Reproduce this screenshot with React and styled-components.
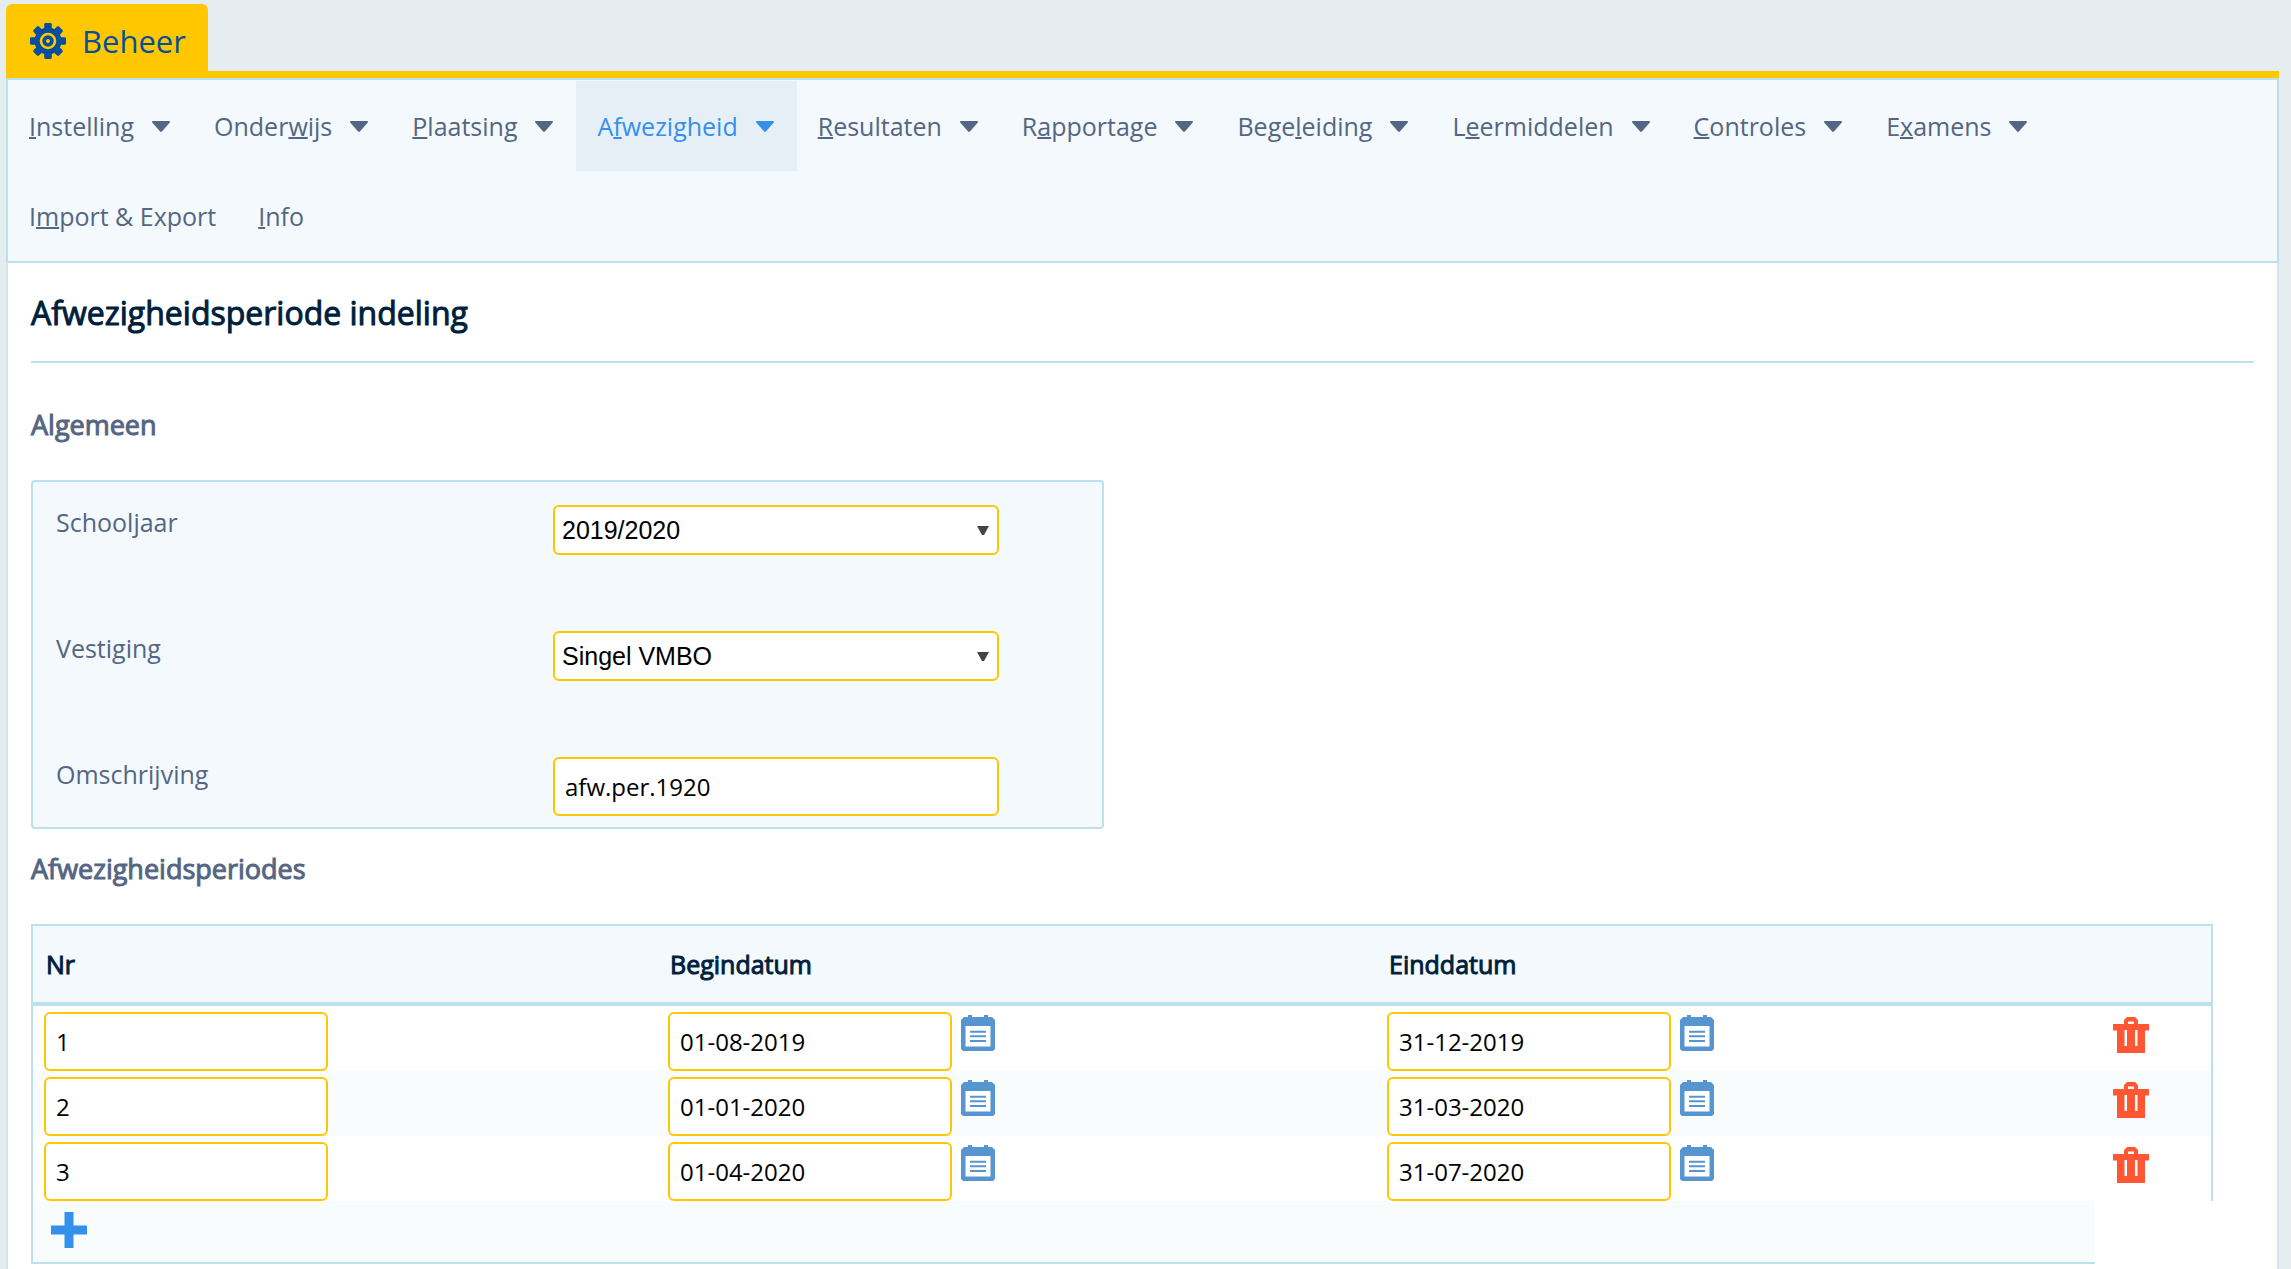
import React from "react";
import styled, { createGlobalStyle } from "styled-components";

const colors = {
  backdrop: "#e5edf0",
  pageEdge: "#d6e5ea",
  line: "#bbe1ef",
  panel: "#f3f9fd",
  active: "#e6eff5",
  stripe: "#f8fcfd",
  yellow: "#ffc700",
  brand: "#054f9e",
  text: "#546683",
  heading: "#001f3d",
  link: "#3391ec",
  calendar: "#5695d0",
  danger: "#ff5733",
};

const GlobalStyle = createGlobalStyle`
  *, *::before, *::after { box-sizing: border-box; }
  body {
    margin: 0;
    background: ${colors.backdrop};
    color: ${colors.text};
    font: 25px/34px "Open Sans", sans-serif;
  }
`;

const Shell = styled.div`
  display: flex;
  flex-direction: column;
  min-height: 100vh;
  padding: 4px 12px 0 6px;
`;

const TabBar = styled.header`
  display: flex;
  border-bottom: 7px solid ${colors.yellow};
`;

const Tab = styled.a`
  display: flex;
  align-items: center;
  gap: 16px;
  height: 67px;
  padding: 7px 22px 0 24px;
  border-radius: 6px 6px 0 0;
  background: ${colors.yellow};
  color: ${colors.brand};
  font-size: 31px;
  text-decoration: none;
`;

const Nav = styled.nav`
  display: flex;
  flex-wrap: wrap;
  padding: 1px 21px 0 0;
  border: 2px solid ${colors.line};
  background: ${colors.panel};
`;

const NavItem = styled.button`
  display: flex;
  align-items: center;
  gap: 18px;
  height: 90px;
  padding: 0 23px 0 21px;
  border: 0;
  background: ${(p) => (p.$active ? colors.active : "transparent")};
  color: ${(p) => (p.$active ? colors.link : colors.text)};
  font: inherit;
  cursor: pointer;
`;

const NavLink = styled.a`
  display: flex;
  align-items: center;
  height: 90px;
  padding: 0 21px;
  color: ${colors.text};
  text-decoration: none;
`;

const Key = styled.span`
  text-decoration: underline;
  text-decoration-thickness: 2px;
  text-decoration-skip-ink: none;
`;

const Page = styled.main`
  flex: 1;
  padding: 26px 23px 0;
  border: solid ${colors.pageEdge};
  border-width: 0 2px;
  background: #fff;
`;

const Title = styled.h1`
  margin: 0 0 42px;
  padding-bottom: 24px;
  border-bottom: 2px solid ${colors.line};
  color: ${colors.heading};
  font-size: 32px;
  font-weight: 400;
  line-height: 48px;
  -webkit-text-stroke: 1px currentColor;
`;

const SectionTitle = styled.h2`
  margin: 0 0 35px;
  font-size: 27px;
  font-weight: 400;
  line-height: 40px;
  -webkit-text-stroke: 1px currentColor;
`;

const Panel = styled.div`
  display: flex;
  flex-direction: column;
  width: calc(50% - 39px);
  margin-bottom: 20px;
  padding: 23px 23px 11px;
  border: 2px solid ${colors.line};
  border-radius: 4px;
  background: ${colors.panel};
`;

const Field = styled.div`
  display: grid;
  grid-template-columns: 497px minmax(0, 446px);
  align-items: start;
  min-height: 126px;

  &:last-child {
    min-height: 0;
  }
`;

const SelectBox = styled.div`
  position: relative;
  display: flex;

  svg {
    position: absolute;
    top: 21px;
    right: 10px;
    pointer-events: none;
  }
`;

const Select = styled.select`
  appearance: none;
  width: 100%;
  height: 50px;
  padding: 0 30px 0 7px;
  border: 2px solid ${colors.yellow};
  border-radius: 6px;
  background: #fff;
  color: #000;
  font: 25px "Liberation Sans", Arial, sans-serif;
`;

const Input = styled.input`
  width: ${(p) => (p.$cell ? "284px" : "100%")};
  height: 59px;
  padding: 0 10px;
  border: 2px solid ${colors.yellow};
  border-radius: 6px;
  background: #fff;
  color: #000;
  font: inherit;
  font-size: 24px;
`;

const TableWrap = styled.div`
  margin-right: 41px;
`;

const Table = styled.table`
  width: 100%;
  table-layout: fixed;
  border-collapse: separate;
  border-spacing: 0;
  border: solid ${colors.line};
  border-width: 2px 0 0 2px;
`;

const NrCol = styled.col`
  width: 624px;
`;

const ActionCol = styled.col`
  width: 118px;
`;

const HeadCell = styled.th`
  height: 80px;
  padding: 0 13px;
  border-bottom: 4px solid ${colors.line};
  background: ${colors.panel};
  color: ${colors.heading};
  font-weight: 400;
  text-align: left;
  -webkit-text-stroke: 1px currentColor;

  &:last-child {
    border-right: 2px solid ${colors.line};
  }
`;

const Row = styled.tr`
  background: ${(p) => (p.$striped ? colors.stripe : "#fff")};
`;

const Cell = styled.td`
  padding: 6px 11px 0;
  vertical-align: top;
`;

const ActionCell = styled.td`
  padding: 11px 18px 0;
  border-right: 2px solid ${colors.line};
  vertical-align: top;
`;

const AddCell = styled.td`
  height: 63px;
  padding: 11px 18px 0;
  border-bottom: 2px solid ${colors.line};
  background: ${colors.stripe};
  vertical-align: top;
`;

const DateField = styled.div`
  display: flex;
  align-items: flex-start;
  gap: 9px;
`;

const IconButton = styled.button`
  display: block;
  padding: ${(p) => (p.$lowered ? "3px 0 0" : "0")};
  border: 0;
  background: none;
  cursor: pointer;

  svg {
    display: block;
  }
`;

const Gear = () => (
  <svg width="36" height="36" viewBox="-18 -18 36 36" aria-hidden="true">
    <g fill={colors.brand}>
      <circle r="13.5" />
      {[0, 45, 90, 135].map((angle) => (
        <rect
          key={angle}
          x="-3.8"
          y={-18}
          width="7.6"
          height={36}
          rx="1.4"
          transform={`rotate(${angle})`}
        />
      ))}
    </g>
    <circle r="7" fill="none" stroke={colors.yellow} strokeWidth="2.6" />
    <circle r="2" fill={colors.yellow} />
  </svg>
);

const Caret = () => (
  <svg width="18" height="11" viewBox="0 0 18 11" aria-hidden="true">
    <path
      d="M1.2 0h15.6c1 0 1.5 1 .8 1.800l-7.500 8.500c-.6.7-1.600.7-2.200 0L.4 1.800C-.3 1 .2 0 1.200 0z"
      fill="currentColor"
    />
  </svg>
);

const SelectArrow = () => (
  <svg width="12" height="9" viewBox="0 0 12 9" aria-hidden="true">
    <path d="M0 0h12L7 9H5z" fill="#444" />
  </svg>
);

const CalendarIcon = () => (
  <svg width="34" height="36" viewBox="0 0 34 36" aria-hidden="true">
    <path
      d="M7 0h4v2h12V0h4v2h4l3 3v29l-2 2H2l-2-2V5l3-3h4z"
      fill={colors.calendar}
    />
    <rect x="4.500" y="11" width="25" height="20.500" fill="#fff" />
    <path
      d="M9 16.700h16M9 21.300h16M9 25.900h16"
      stroke={colors.calendar}
      strokeWidth="2"
    />
  </svg>
);

const TrashIcon = () => (
  <svg width="36" height="36" viewBox="0 0 36 36" aria-hidden="true">
    <path
      fillRule="evenodd"
      d="M14 0h8l3 3v4h11v6.500h-4V36H4V13.500H0V7h11V3zM15 4.500V7h6V4.500zM11.500 13v16h2.500V13zM22 13v16h2.500V13z"
      fill={colors.danger}
    />
  </svg>
);

const PlusIcon = () => (
  <svg width="36" height="36" viewBox="0 0 36 36" aria-hidden="true">
    <path d="M13.500 0h9v13.500H36v9H22.500V36h-9V22.500H0v-9h13.500z" fill={colors.link} />
  </svg>
);

// Each label is split as [before, access key, after].
const menus = [
  ["", "I", "nstelling"],
  ["Onder", "w", "ijs"],
  ["", "P", "laatsing"],
  ["A", "f", "wezigheid"],
  ["", "R", "esultaten"],
  ["R", "a", "pportage"],
  ["Bege", "l", "eiding"],
  ["L", "e", "ermiddelen"],
  ["", "C", "ontroles"],
  ["E", "x", "amens"],
];

const links = [
  ["I", "m", "port & Export"],
  ["", "I", "nfo"],
];

const periods = [
  { nr: "1", start: "01-08-2019", end: "31-12-2019" },
  { nr: "2", start: "01-01-2020", end: "31-03-2020" },
  { nr: "3", start: "01-04-2020", end: "31-07-2020" },
];

const MenuLabel = ({ parts: [before, key, after] }) => (
  <span>
    {before}
    <Key>{key}</Key>
    {after}
  </span>
);

const SelectField = ({ id, label, value }) => (
  <Field>
    <label htmlFor={id}>{label}</label>
    <SelectBox>
      <Select id={id} defaultValue={value}>
        <option>{value}</option>
      </Select>
      <SelectArrow />
    </SelectBox>
  </Field>
);

const DateCell = ({ label, value }) => (
  <Cell>
    <DateField>
      <Input $cell aria-label={label} defaultValue={value} />
      <IconButton $lowered type="button" aria-label={`${label} kiezen`}>
        <CalendarIcon />
      </IconButton>
    </DateField>
  </Cell>
);

export default function App() {
  return (
    <>
      <GlobalStyle />
      <Shell>
        <TabBar>
          <Tab href="#beheer">
            <Gear />
            Beheer
          </Tab>
        </TabBar>
        <Nav>
          {menus.map((parts) => (
            <NavItem key={parts.join("")} type="button" $active={parts[1] === "f"}>
              <MenuLabel parts={parts} />
              <Caret />
            </NavItem>
          ))}
          {links.map((parts) => (
            <NavLink key={parts.join("")} href="#menu">
              <MenuLabel parts={parts} />
            </NavLink>
          ))}
        </Nav>
        <Page>
          <Title>Afwezigheidsperiode indeling</Title>
          <SectionTitle>Algemeen</SectionTitle>
          <Panel>
            <SelectField id="schooljaar" label="Schooljaar" value="2019/2020" />
            <SelectField id="vestiging" label="Vestiging" value="Singel VMBO" />
            <Field>
              <label htmlFor="omschrijving">Omschrijving</label>
              <Input id="omschrijving" defaultValue="afw.per.1920" />
            </Field>
          </Panel>
          <SectionTitle>Afwezigheidsperiodes</SectionTitle>
          <TableWrap>
            <Table>
              <colgroup>
                <NrCol />
                <col />
                <col />
                <ActionCol />
              </colgroup>
              <thead>
                <tr>
                  <HeadCell>Nr</HeadCell>
                  <HeadCell>Begindatum</HeadCell>
                  <HeadCell>Einddatum</HeadCell>
                  <HeadCell aria-label="Acties" />
                </tr>
              </thead>
              <tbody>
                {periods.map((period, index) => (
                  <Row key={period.nr} $striped={index % 2 === 1}>
                    <Cell>
                      <DateField>
                        <Input $cell aria-label="Nr" defaultValue={period.nr} />
                      </DateField>
                    </Cell>
                    <DateCell label="Begindatum" value={period.start} />
                    <DateCell label="Einddatum" value={period.end} />
                    <ActionCell>
                      <IconButton type="button" aria-label="Verwijderen">
                        <TrashIcon />
                      </IconButton>
                    </ActionCell>
                  </Row>
                ))}
                <tr>
                  <AddCell colSpan={3}>
                    <IconButton type="button" aria-label="Toevoegen">
                      <PlusIcon />
                    </IconButton>
                  </AddCell>
                </tr>
              </tbody>
            </Table>
          </TableWrap>
        </Page>
      </Shell>
    </>
  );
}
